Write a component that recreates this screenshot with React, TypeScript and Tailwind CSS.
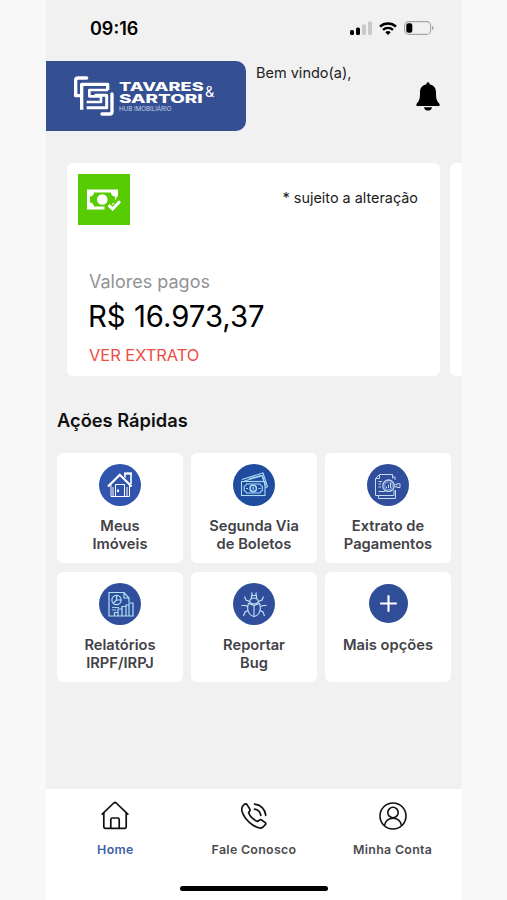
import type { ReactNode } from "react";

interface QuickAction {
  id: string;
  lines: string[];
  color: string;
  icon: ReactNode;
}

// =======================
// ICONS
// =======================
const LogoMark = () => (
  <svg viewBox="0 0 150 144" className="w-[50px] h-[48px] shrink-0" fill="none" stroke="#fff" strokeLinejoin="round">
    <path d="M50 18H24Q17 18 17 25V71H32" strokeWidth="10" strokeLinecap="round" />
    <path d="M35 113V37H113V54" strokeWidth="10" />
    <path d="M114 54H58V73H93V90H50" strokeWidth="8" />
    <path d="M50 107H110V70H74" strokeWidth="9" />
    <path d="M126 66V119Q126 126 119 126H96" strokeWidth="10" strokeLinecap="round" />
  </svg>
);

const SignalIcon = () => (
  <svg viewBox="0 0 22 14" className="w-[22px] h-[14px]">
    <rect x="0" y="9" width="4" height="5" rx="1.5" fill="#000" />
    <rect x="6" y="6.5" width="4" height="7.5" rx="1.5" fill="#000" />
    <rect x="12" y="3.5" width="4" height="10.5" rx="1.2" fill="#c9c9c9" />
    <rect x="18" y="0.5" width="4" height="13.5" rx="1.2" fill="#c9c9c9" />
  </svg>
);

const WifiIcon = () => (
  <svg viewBox="0 0 18 13" className="w-[18px] h-[13px]" fill="none" stroke="#000">
    <path d="M1 4.6C5.4 0.4 12.6 0.4 17 4.6" strokeWidth="2.5" />
    <path d="M4 7.9C6.8 5.2 11.2 5.2 14 7.9" strokeWidth="2.3" />
    <path d="M9 13L6.3 10.2Q9 8 11.7 10.2Z" fill="#000" stroke="none" />
  </svg>
);

const BatteryIcon = () => (
  <svg viewBox="0 0 30 14" className="w-[30px] h-[14px]">
    <rect x="0.6" y="0.6" width="26" height="12.8" rx="4" fill="none" stroke="#a6a6a6" strokeWidth="1.1" />
    <rect x="2.3" y="2.3" width="6" height="9.4" rx="2" fill="#000" />
    <path d="M28 4.8Q29.6 5.4 29.6 7T28 9.2Z" fill="#a6a6a6" />
  </svg>
);

const BellIcon = () => (
  <svg viewBox="0 0 24 29" className="w-6 h-[29px]" fill="#000">
    <path d="M12 0.3C13 0.3 13.5 1 13.5 2.2C17.6 3 20 6 20 10.2C20 16.6 20.6 18.6 23.2 21.4C24.2 22.6 23.7 24 22.2 24H1.8C0.3 24 -0.2 22.6 0.8 21.4C3.4 18.6 4 16.6 4 10.2C4 6 6.4 3 10.5 2.2C10.5 1 11 0.3 12 0.3Z" />
    <path d="M8 25.2H16C15.7 27.3 14.1 28.6 12 28.6S8.3 27.3 8 25.2Z" />
  </svg>
);

const PaidIcon = () => (
  <svg viewBox="0 0 34 22" className="w-[34px] h-[22px]">
    <rect x="0" y="0.5" width="31" height="20" fill="#fff" />
    <path d="M7 3.5H24C24 5.7 25.6 7.5 28 7.5V13.5C25.6 13.5 24 15.3 24 17.5H7C7 15.3 5.4 13.5 3 13.5V7.5C5.4 7.5 7 5.7 7 3.5Z" fill="#58cc02" />
    <circle cx="15.3" cy="10.5" r="5.3" fill="#fff" />
    <path d="M17.5 22V17L21 13.5L26 16L30 7.5H34V22Z" fill="#58cc02" />
    <path d="M21.6 16.2L25.6 20L33 12.2" fill="none" stroke="#fff" strokeWidth="3" />
  </svg>
);

const HouseIcon = () => (
  <svg viewBox="0 0 42 42" className="size-full" fill="none" stroke="#fff">
    <path d="M9 22.5L20.8 10.8L32.6 22.5" strokeWidth="2.2" />
    <path d="M26 13.5V9.5H32V20" strokeWidth="1.6" />
    <path d="M25 9.5H33" strokeWidth="2" />
    <path d="M12 21V32.5H30.5V21M16.5 32V20.5H25.5V32M14 23V32M28 23V32" strokeWidth="1" />
    <path d="M19 25.5V28" strokeWidth="2" />
  </svg>
);

const BillsIcon = () => (
  <svg viewBox="0 0 42 42" className="size-full" fill="none" stroke="#a9dcf5" strokeWidth="1.1">
    <rect x="8.5" y="17.5" width="23.5" height="14" />
    <path d="M9 15.5L30 9L34.5 22.5L32.5 24M11.5 17L29 11.7L32.5 22M16 15L27.5 11.5" />
    <path d="M13.5 20H27Q27.3 21.8 29.3 22.2V26.7Q27.3 27.2 27 29H13.5Q13.2 27.2 11.2 26.7V22.2Q13.2 21.8 13.5 20Z" />
    <circle cx="20.2" cy="24.5" r="3.2" strokeWidth="1.5" />
    <path d="M20.2 22.8V26.2M13 24.5H15M25.5 24.5H27.5" strokeWidth="1.2" />
    <path d="M29 11L31 16" />
  </svg>
);

const StatementIcon = () => (
  <svg viewBox="0 0 42 42" className="size-full" fill="none" stroke="#c3d9f2" strokeWidth="1">
    <path d="M12.5 10.5H25.5V14.5M27 26V31.5H8.5V14.5L12.5 10.5V14.5H8.5" />
    <path d="M26 13H28V16M28.5 26V34.5H11.5V32" />
    <circle cx="21.5" cy="21.7" r="5.7" strokeWidth="1.3" />
    <circle cx="21.5" cy="21.7" r="4" strokeWidth="0.6" />
    <path d="M27.5 20.7H30V19.8H33V23.5H30V22.7H27.5" />
    <path d="M11.5 17.5H15M11.5 20H14M11.5 23H14M11.5 27.5H18M19.5 22.5V24M21.5 20.5V24M23.5 19V24" />
  </svg>
);

const ReportIcon = () => (
  <svg viewBox="0 0 42 42" className="size-full" fill="none" stroke="#aee3f3" strokeWidth="1.2">
    <path d="M14 33H10V9.5H25L30 15V19M25 9.5V15H30" />
    <circle cx="17.5" cy="17" r="4.6" />
    <path d="M17.5 17V12.4M17.5 17H22M17.5 17L14.3 20.3" />
    <path d="M13 24.5H20M13 27H17" strokeWidth="0.9" />
    <path d="M15.5 33V29.5H19V33M19 29.5V26H23V33M23 26V23.5H27V33M27 23.5V22H30V33M30 22.5V20H34V33H14" />
  </svg>
);

const BugIcon = () => (
  <svg viewBox="0 0 42 42" className="size-full" fill="none" stroke="#c7e4f7" strokeWidth="1.1">
    <path d="M19 12.5V10.5L18.5 9.5M23 12.5V10.5L23.5 9.5M18.5 15V12.5H23.5V15" />
    <path d="M16.5 19Q17 15 21 15T25.5 19Q23.5 21 21 21T16.5 19Z" />
    <path d="M15.5 20.5Q14.5 23 14.7 26Q15.5 32.5 21 33.5Q26.5 32.5 27.3 26Q27.5 23 26.5 20.5L21 22.3L15.5 20.5Z" />
    <path d="M21 22.3V33.5" />
    <path d="M16.5 18.5L13 17L11.5 13.5M25.5 18.5L29 17L30.5 13.5M14.8 23.5L12 22.5H8.5M27.2 23.5L30 22.5H33.5M15 27.5L12 29L10.5 33M27 27.5L30 29L31.5 33" />
  </svg>
);

const PlusIcon = () => (
  <svg viewBox="0 0 42 42" className="size-full" stroke="#fff" strokeWidth="2.3">
    <path d="M12 21H30M21 12V30" />
  </svg>
);

const HomeNavIcon = () => (
  <svg viewBox="0 0 28 29" className="w-7 h-[29px]" fill="none" stroke="#111" strokeWidth="1.7" strokeLinecap="round" strokeLinejoin="round">
    <path d="M1.2 13.2L12.8 2Q14 1 15.2 2L26.8 13.2" />
    <path d="M2.8 12V25.6Q2.8 27.3 4.5 27.3H23.5Q25.2 27.3 25.2 25.6V12" />
    <path d="M9.8 27V18.5Q9.8 17 11.3 17H16.7Q18.2 17 18.2 18.5V27" />
  </svg>
);

const PhoneNavIcon = () => (
  <svg viewBox="0 0 26 26" className="size-[26px]" fill="none" stroke="#111" strokeWidth="1.7" strokeLinecap="round" strokeLinejoin="round">
    <path d="M2.8 1.8Q0 4.2 1 8.3Q3 14.7 8.3 19.3Q13 23.6 18.7 25Q20.5 25.3 22 24L24.4 21.7Q25.3 20.6 24.3 19.6L20.5 17Q19.4 16.3 18.3 17.2L16.4 18.5Q13.6 17.3 10.8 14.7Q8.5 12.4 7.6 9.8L8.8 7.8Q9.4 6.8 8.6 5.7L6.2 1.9Q4.7 0 2.8 1.8Z" />
    <path d="M13.5 1.2Q18.2 1.6 21.2 4.6T24.8 12.3" />
    <path d="M13.5 6.2Q16.4 6.6 17.8 8.1T19.8 12.3" />
  </svg>
);

const UserNavIcon = () => (
  <svg viewBox="0 0 28 28" className="size-7" fill="none" stroke="#111" strokeWidth="1.6">
    <circle cx="14" cy="14" r="13" />
    <circle cx="14" cy="10.5" r="5.2" />
    <path d="M5.5 23.6Q7 16.3 14 16.3T22.5 23.6" />
  </svg>
);

// =======================
// DATA
// =======================
const actions: QuickAction[] = [
  { id: "imoveis", lines: ["Meus", "Imóveis"], color: "#3155ae", icon: <HouseIcon /> },
  { id: "boletos", lines: ["Segunda Via", "de Boletos"], color: "#204ca0", icon: <BillsIcon /> },
  { id: "extrato", lines: ["Extrato de", "Pagamentos"], color: "#304e9b", icon: <StatementIcon /> },
  { id: "relatorios", lines: ["Relatórios", "IRPF/IRPJ"], color: "#304e9b", icon: <ReportIcon /> },
  { id: "bug", lines: ["Reportar", "Bug"], color: "#304e9b", icon: <BugIcon /> },
  { id: "mais", lines: ["Mais opções"], color: "#304e98", icon: <PlusIcon /> },
];

const tabs = [
  { id: "home", label: "Home", active: true, icon: <HomeNavIcon /> },
  { id: "contato", label: "Fale Conosco", active: false, icon: <PhoneNavIcon /> },
  { id: "conta", label: "Minha Conta", active: false, icon: <UserNavIcon /> },
];

export default function App() {
  return (
    <div className="h-[900px] w-[507px] bg-[#f8f8f8] pl-[46px] font-['Inter',sans-serif] overflow-hidden">
      <div className="flex h-full w-[416px] flex-col overflow-hidden bg-[#f1f1f1]">

        {/* STATUS BAR */}
        <div className="flex h-[61px] shrink-0 items-start justify-between pl-[44px] pr-[28px] pt-[17px]">
          <span className="text-[18px] leading-6 font-semibold text-black">09:16</span>
          <div className="flex items-center pt-[4px]">
            <SignalIcon />
            <div className="ml-[7px]"><WifiIcon /></div>
            <div className="ml-[7px]"><BatteryIcon /></div>
          </div>
        </div>

        {/* HEADER */}
        <div className="flex h-[102px] shrink-0 items-start">
          <div className="flex h-[70px] w-[200px] items-start rounded-r-[10px] bg-[#344f92] pl-6 pt-[11px] text-white">
            <LogoMark />
            <div className="-ml-px flex w-[85px] shrink-0 flex-col items-start pt-[9px]">
              <span className="origin-left scale-x-[1.54] whitespace-nowrap text-[11.8px] leading-[12px] font-extrabold">TAVARES</span>
              <span className="origin-left scale-x-[1.6] whitespace-nowrap text-[11.8px] leading-[12px] font-extrabold">SARTORI</span>
              <span className="whitespace-nowrap text-[6.2px] leading-[8px] text-[#c6d0ea]">HUB IMOBILIÁRIO</span>
            </div>
            <span className="ml-px mt-[11px] text-[14.5px] leading-[18px]">&amp;</span>
          </div>
          <span className="ml-[10px] mt-[2px] whitespace-nowrap text-[14.5px] leading-5 text-[#222]">Bem vindo(a),</span>
          <div className="ml-auto mr-[22px] mt-[21px]"><BellIcon /></div>
        </div>

        {/* BALANCE CAROUSEL */}
        <div className="flex h-[213px] shrink-0 gap-[10px] pl-[21px]">
          <div className="flex w-[373px] shrink-0 flex-col rounded-md bg-white px-[22px] pt-[11px]">
            <div className="flex items-start justify-between">
              <div className="-ml-[11px] flex h-[51px] w-[52px] items-center justify-center bg-[#58cc02]">
                <PaidIcon />
              </div>
              <span className="mt-[14px] whitespace-nowrap text-[14.4px] leading-5 text-[#1c1c1c]">* sujeito a alteração</span>
            </div>
            <span className="mt-[45px] text-[18px] leading-6 text-[#929296]">Valores pagos</span>
            <span className="mt-[5px] -ml-px text-[29.3px] leading-9 text-black">R$ 16.973,37</span>
            <span className="mt-[8px] text-[16.4px] leading-6 text-[#ef4c43]">VER EXTRATO</span>
          </div>
          <div className="w-[373px] shrink-0 rounded-md bg-white" />
        </div>

        {/* QUICK ACTIONS */}
        <h2 className="ml-[11px] mt-[30px] text-[18.3px] leading-7 font-semibold text-[#111]">Ações Rápidas</h2>
        <div className="mt-[19px] grid grid-cols-3 gap-x-2 gap-y-[9px] px-[11px]">
          {actions.map((a) => (
            <div key={a.id} className="flex h-[110px] flex-col items-center rounded-md bg-white pt-[10px]">
              <div className="flex h-[43px] items-center">
                <div
                  className={a.id === "mais" ? "size-[39px] rounded-full" : "size-[42px] rounded-full"}
                  style={{ backgroundColor: a.color }}
                >
                  {a.icon}
                </div>
              </div>
              <div className="mt-[11px] text-center text-[14.7px] leading-[18px] font-semibold text-[#424248]">
                {a.lines.map((line) => (
                  <div key={line} className="whitespace-nowrap">{line}</div>
                ))}
              </div>
            </div>
          ))}
        </div>

        {/* BOTTOM TABS */}
        <div className="mt-auto flex h-[111px] shrink-0 flex-col items-center bg-white">
          <div className="grid w-full grid-cols-3">
            {tabs.map((t) => (
              <div key={t.id} className="flex flex-col items-center pt-[12px]">
                <div className="flex h-[29px] items-center">{t.icon}</div>
                <span
                  className={`mt-[10px] whitespace-nowrap text-[12.4px] leading-[19px] font-semibold tracking-[0.3px] ${
                    t.active ? "text-[#405fa8]" : "text-[#4b4b50]"
                  }`}
                >
                  {t.label}
                </span>
              </div>
            ))}
          </div>
          <div className="mt-auto mb-[9px] h-[5px] w-[148px] rounded-full bg-black" />
        </div>
      </div>
    </div>
  );
}
